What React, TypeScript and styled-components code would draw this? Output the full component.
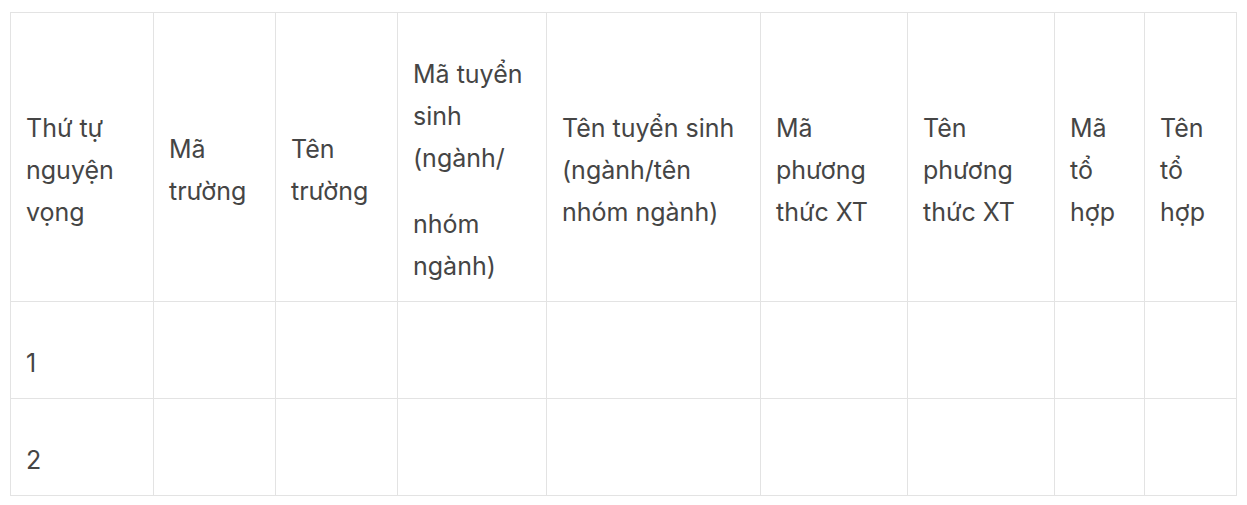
import styled, { createGlobalStyle } from "styled-components";

const GlobalStyle = createGlobalStyle`
  body {
    margin: 0;
    background: #ffffff;
    font-family: Inter, "Open Sans", sans-serif;
  }
`;

const Wrapper = styled.div`
  padding: 12px 11px 0 10px;
`;

const Table = styled.table`
  width: 1226px;
  border-collapse: collapse;
  table-layout: fixed;
  border: 1px solid #e3e3e3;
`;

const Cell = styled.td`
  border: 1px solid #e3e3e3;
  padding: 16px 16px 14px 15px;
  vertical-align: middle;
  color: #454545;
  font-size: 25px;
  line-height: 42px;
  font-weight: 400;
`;

const Text = styled.p`
  margin: 24px 0 0;
`;

const columns = [143, 122, 122, 149, 214, 147, 147, 90, 92];

const headers: string[][] = [
  ["Thứ tự nguyện vọng"],
  ["Mã trường"],
  ["Tên trường"],
  ["Mã tuyển sinh (ngành/", "nhóm ngành)"],
  ["Tên tuyển sinh (ngành/tên nhóm ngành)"],
  ["Mã phương thức XT"],
  ["Tên phương thức XT"],
  ["Mã tổ hợp"],
  ["Tên tổ hợp"],
];

const rows = ["1", "2"];

const App = () => {
  return (
    <Wrapper>
      <GlobalStyle />
      <Table>
        <colgroup>
          {columns.map((w, i) => (
            <col key={i} style={{ width: w }} />
          ))}
        </colgroup>
        <tbody>
          <tr>
            {headers.map((parts, i) => (
              <Cell key={i}>
                {parts.map((p, j) => (
                  <Text key={j}>{p}</Text>
                ))}
              </Cell>
            ))}
          </tr>
          {rows.map((r) => (
            <tr key={r}>
              {columns.map((_, i) => (
                <Cell key={i}>{i === 0 ? <Text>{r}</Text> : <Text>&nbsp;</Text>}</Cell>
              ))}
            </tr>
          ))}
        </tbody>
      </Table>
    </Wrapper>
  );
};

export default App;
